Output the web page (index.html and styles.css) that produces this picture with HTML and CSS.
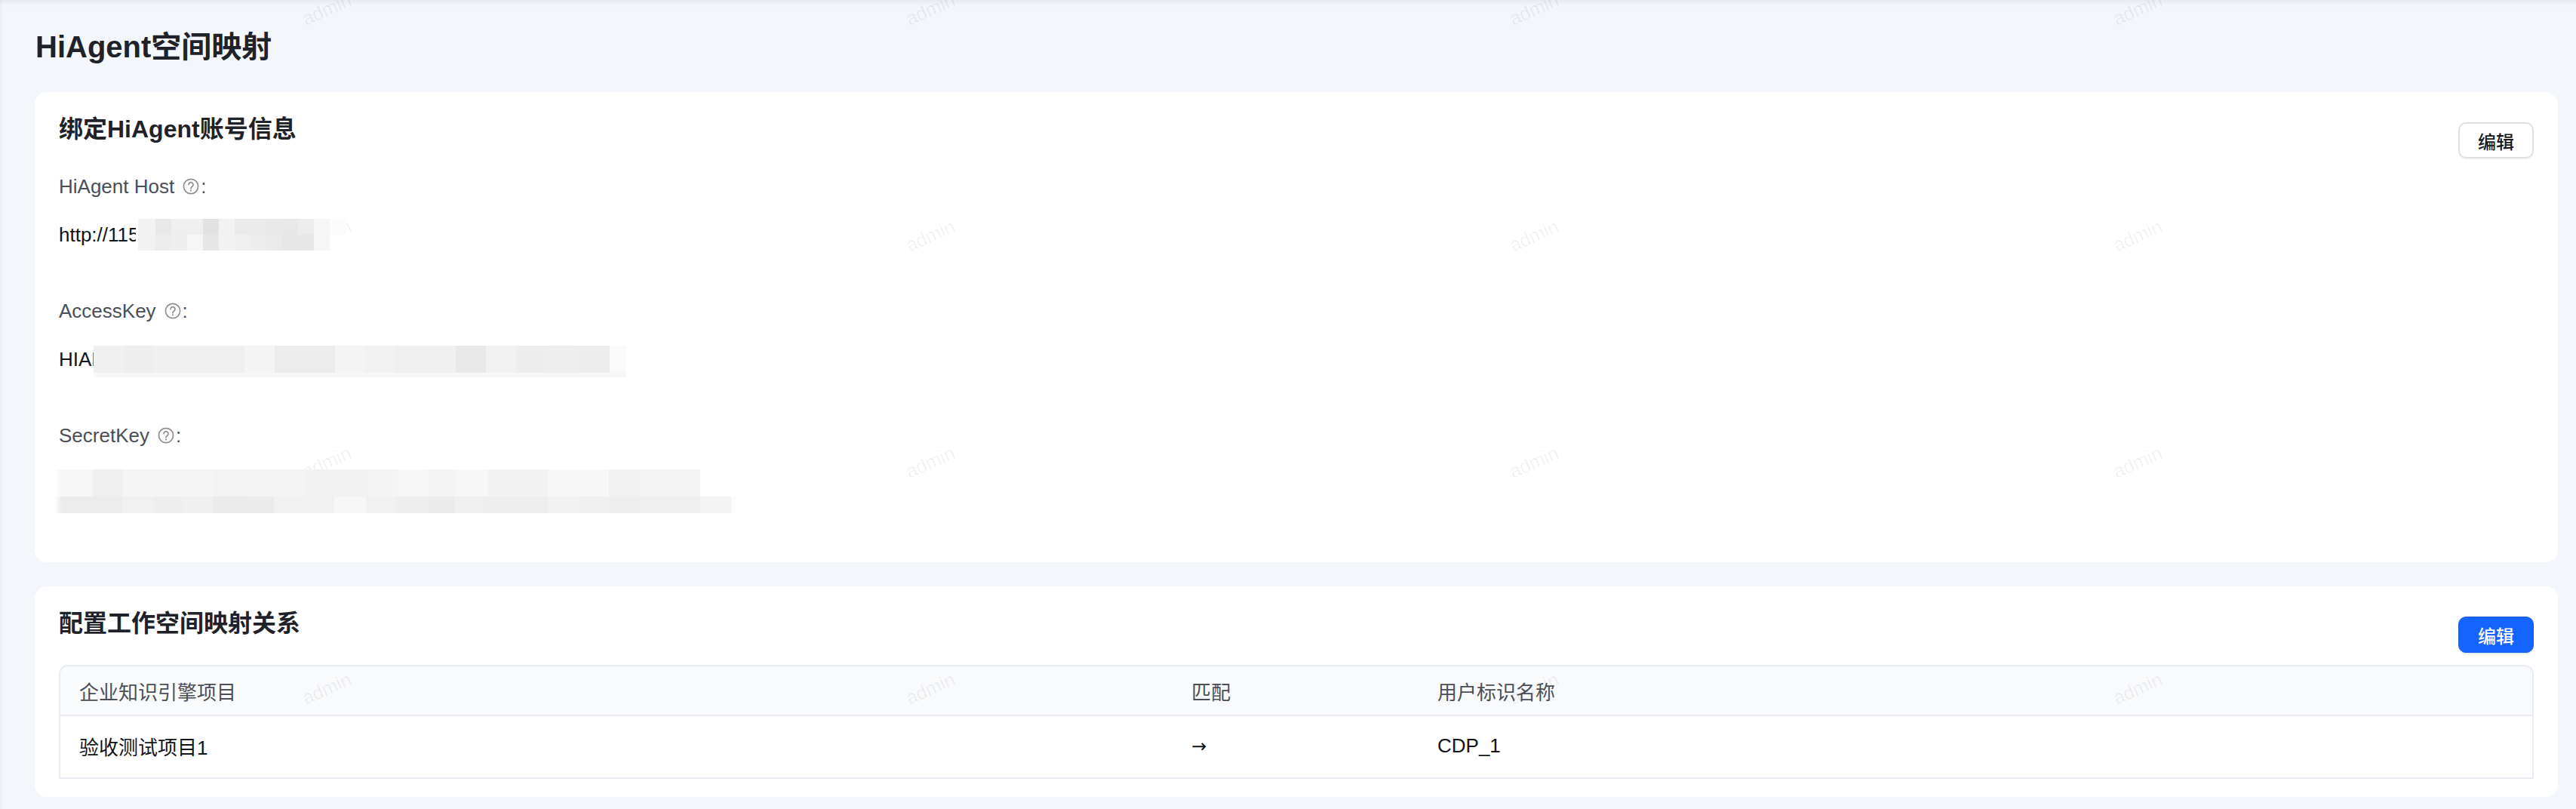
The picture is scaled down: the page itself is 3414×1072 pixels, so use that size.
FILE: index.html
```html
<!DOCTYPE html>
<html lang="zh-CN">
<head>
    <meta charset="UTF-8">
    <meta name="viewport" content="width=device-width, initial-scale=1.0">
    <title>HiAgent空间映射</title>
    <link rel="stylesheet" href="styles.css">
</head>
<body>
    <main class="page">
        <h1 class="page-title">HiAgent空间映射</h1>

        <section class="card card-account">
            <div class="card-head">
                <h2 class="card-title">绑定HiAgent账号信息</h2>
                <button class="btn" type="button">编辑</button>
            </div>

            <div class="field">
                <div class="field-label">
                    <span>HiAgent Host</span>
                    <svg class="help-icon" viewBox="0 0 22 22"><circle cx="11" cy="11" r="9.6"/><path d="M8 8.6a3 3 0 1 1 4.8 2.4c-1.2.9-1.8 1.4-1.8 2.8"/><path class="help-dot" d="M11 16.2v.4"/></svg>
                    <span class="colon">:</span>
                </div>
                <div class="field-value">
                    <span class="value-clip clip-host">http://115</span>
                    <div class="mosaic mosaic-host">
                        <div class="mosaic-row host-top"></div>
                        <div class="mosaic-row host-bottom"></div>
                    </div>
                </div>
            </div>

            <div class="field">
                <div class="field-label">
                    <span>AccessKey</span>
                    <svg class="help-icon" viewBox="0 0 22 22"><circle cx="11" cy="11" r="9.6"/><path d="M8 8.6a3 3 0 1 1 4.8 2.4c-1.2.9-1.8 1.4-1.8 2.8"/><path class="help-dot" d="M11 16.2v.4"/></svg>
                    <span class="colon">:</span>
                </div>
                <div class="field-value">
                    <span class="value-clip clip-access">HIAK</span>
                    <div class="mosaic mosaic-access">
                        <div class="mosaic-row access-top"></div>
                        <div class="mosaic-row access-bottom"></div>
                    </div>
                </div>
            </div>

            <div class="field">
                <div class="field-label">
                    <span>SecretKey</span>
                    <svg class="help-icon" viewBox="0 0 22 22"><circle cx="11" cy="11" r="9.6"/><path d="M8 8.6a3 3 0 1 1 4.8 2.4c-1.2.9-1.8 1.4-1.8 2.8"/><path class="help-dot" d="M11 16.2v.4"/></svg>
                    <span class="colon">:</span>
                </div>
                <div class="field-value">
                    <div class="mosaic mosaic-secret">
                        <div class="mosaic-row secret-top"></div>
                        <div class="mosaic-row secret-bottom"></div>
                    </div>
                </div>
            </div>
        </section>

        <section class="card card-mapping">
            <div class="card-head">
                <h2 class="card-title">配置工作空间映射关系</h2>
                <button class="btn btn-primary" type="button">编辑</button>
            </div>

            <div class="table-wrap">
                <table class="map-table">
                    <thead>
                        <tr>
                            <th class="col-project">企业知识引擎项目</th>
                            <th class="col-match">匹配</th>
                            <th>用户标识名称</th>
                        </tr>
                    </thead>
                    <tbody>
                        <tr>
                            <td>验收测试项目1</td>
                            <td class="arrow">→</td>
                            <td>CDP_1</td>
                        </tr>
                    </tbody>
                </table>
            </div>
        </section>
    </main>

    <div class="watermark">
        <span>admin</span><span>admin</span><span>admin</span><span>admin</span>
        <span>admin</span><span>admin</span><span>admin</span><span>admin</span>
        <span>admin</span><span>admin</span><span>admin</span><span>admin</span>
        <span>admin</span><span>admin</span><span>admin</span><span>admin</span>
    </div>
</body>
</html>
```

FILE: styles.css
```css
* {
    box-sizing: border-box;
}
html, body {
    margin: 0;
    height: 100%;
}
body {
    position: relative;
    overflow: hidden;
    font-family: "Liberation Sans", "Noto Sans CJK SC", sans-serif;
    font-size: 26px;
    color: #111418;
    background-color: #f3f6fb;
}
.page {
    height: 1072px;
    padding: 36px 24px 16px 46px;
    box-shadow: inset 0 9px 8px -7px rgba(0, 0, 0, 0.07), inset 7px 0 6px -7px rgba(0, 0, 0, 0.06);
}
.page-title {
    margin: 0 0 34px 1px;
    font-size: 40px;
    line-height: 52px;
    font-weight: 600;
    color: #1f2329;
}
.card {
    background: white;
    border-radius: 16px;
    padding: 0 32px;
}
.card-account {
    height: 623px;
    margin-bottom: 32px;
}
.card-mapping {
    height: 279px;
}
.card-head {
    display: flex;
    justify-content: space-between;
    align-items: flex-start;
}
.card-account .card-head {
    height: 107px;
}
.card-mapping .card-head {
    height: 104px;
}
.card-title {
    margin: 27px 0 0;
    font-size: 32px;
    line-height: 44px;
    font-weight: 600;
    color: #1f2329;
}
.btn {
    width: 100px;
    height: 48px;
    margin-top: 40px;
    border: 2px solid #e0e0e0;
    border-radius: 10px;
    background: white;
    box-shadow: 0 2px 0 rgba(0, 0, 0, 0.03);
    font-family: inherit;
    font-size: 24px;
    font-weight: 500;
    color: #1a1a1a;
    cursor: pointer;
}
.btn-primary {
    border-color: #1a5bdb;
    border-width: 1px;
    background-color: #1664ff;
    box-shadow: 0 2px 0 rgba(22, 100, 255, 0.1);
    color: white;
}
.field {
    margin-bottom: 62px;
}
.field-label {
    display: flex;
    align-items: center;
    height: 36px;
    margin-bottom: 25px;
    line-height: 36px;
    color: #4a4f57;
}
.help-icon {
    width: 22px;
    height: 22px;
    margin-left: 11px;
    fill: none;
    stroke: #8f8f8f;
    stroke-width: 1.7;
    stroke-linecap: round;
}
.help-dot {
    stroke-width: 2;
}
.colon {
    margin-left: 2px;
}
.field-value {
    display: flex;
    height: 42px;
    line-height: 42px;
}
.value-clip {
    overflow: hidden;
    white-space: nowrap;
}
.clip-host {
    width: 102px;
    margin-right: 3px;
}
.clip-access {
    width: 46px;
}
.mosaic {
    position: relative;
    z-index: 2;
}
.mosaic-host {
    width: 276px;
}
.mosaic-access {
    width: 706px;
    margin-top: 3px;
}
.mosaic-secret {
    width: 909px;
    margin-top: 2px;
    margin-left: -12px;
}
.host-top, .host-bottom {
    height: 21px;
}
.host-top {
    background: linear-gradient(90deg, #f2f2f2 23px, #e8e8e8 23px 44px, #efefef 44px 86px, #e2e2e2 86px 107px, #f2f2f2 107px 128px, #eaeaea 128px 149px, #ebebeb 149px 170px, #e9e9e9 170px 191px, #e8e8e8 191px 212px, #ececec 212px 233px, #f6f6f6 233px 254px, #fcfcfc 254px);
}
.host-bottom {
    background: linear-gradient(90deg, #f1f1f1 23px, #ececec 23px 44px, #eeeeee 44px 65px, #f6f6f6 65px 86px, #e6e6e6 86px 107px, #f2f2f2 107px 128px, #efefef 128px 149px, #ededed 149px 170px, #eaeaea 170px 191px, #e7e7e7 191px 233px, #f6f6f6 233px 254px, #ffffff 254px);
}
.access-top {
    height: 36px;
    background: linear-gradient(90deg, #f0f0f0 40px, #eeeeee 40px 80px, #f0f0f0 80px 120px, #efefef 120px 200px, #f3f4f3 200px 240px, #ececec 240px 320px, #f4f4f4 320px 360px, #f1f1f1 360px 400px, #efefef 400px 440px, #f0f0f0 440px 480px, #e9e9e9 480px 520px, #f1f1f1 520px 560px, #ededed 560px 600px, #eeeeee 600px 640px, #ededed 640px 684px, #fafafa 684px);
}
.access-bottom {
    height: 6px;
    background-color: #f7f7f7;
}
.secret-top {
    height: 36px;
    background: linear-gradient(90deg, #ffffff 6px, #f6f6f6 16px 56px, #efefef 56px 96px, #f5f5f5 96px 216px, #f3f3f3 216px 256px, #f4f4f4 256px 337px, #f2f2f2 337px 421px, #f4f4f4 421px 461px, #f7f7f7 461px 501px, #f4f4f4 501px 537px, #f7f7f7 537px 581px, #f2f2f2 581px 661px, #f7f7f7 661px 741px, #f1f1f1 741px 781px, #f3f3f3 781px 862px, #ffffff 862px);
}
.secret-bottom {
    height: 22px;
    background: linear-gradient(90deg, #ffffff 6px, #ececec 16px 96px, #f1f1f1 96px 137px, #eeeeee 137px 176px, #f0f0f0 176px 216px, #ebebeb 216px 297px, #f1f1f1 297px 377px, #f7f7f7 377px 419px, #f1f1f1 419px 459px, #eeeeee 459px 501px, #ebebeb 501px 537px, #efefef 537px 577px, #eeeeee 577px 661px, #f2f2f2 661px 701px, #f0f0f0 701px 741px, #eeeeee 741px 781px, #efefef 781px 862px, #f3f3f3 862px 903px, #fcfcfc 903px);
}
.table-wrap {
    border: 2px solid #e8ecf1;
    border-radius: 12px 12px 0 0;
    overflow: hidden;
}
.map-table {
    width: 100%;
    border-collapse: collapse;
    table-layout: fixed;
}
.map-table th {
    height: 65px;
    padding: 0 25px;
    border-bottom: 2px solid #e8ecf1;
    background-color: #f9fafc;
    font-weight: 400;
    text-align: left;
    color: #4a4f57;
}
.map-table td {
    height: 82px;
    padding: 0 25px 2px;
    color: #111418;
}
.map-table .arrow {
    font-family: "DejaVu Sans", sans-serif;
    font-size: 24px;
}
.col-project {
    width: 1474px;
}
.col-match {
    width: 326px;
}
.watermark {
    position: absolute;
    top: -138px;
    left: 33px;
    z-index: 1;
    display: grid;
    grid-template-columns: repeat(4, 800px);
    grid-auto-rows: 300px;
    pointer-events: none;
}
.watermark span {
    align-self: center;
    justify-self: center;
    transform: rotate(-24deg);
    font-size: 25px;
    color: rgba(0, 0, 0, 0.06);
}
```
